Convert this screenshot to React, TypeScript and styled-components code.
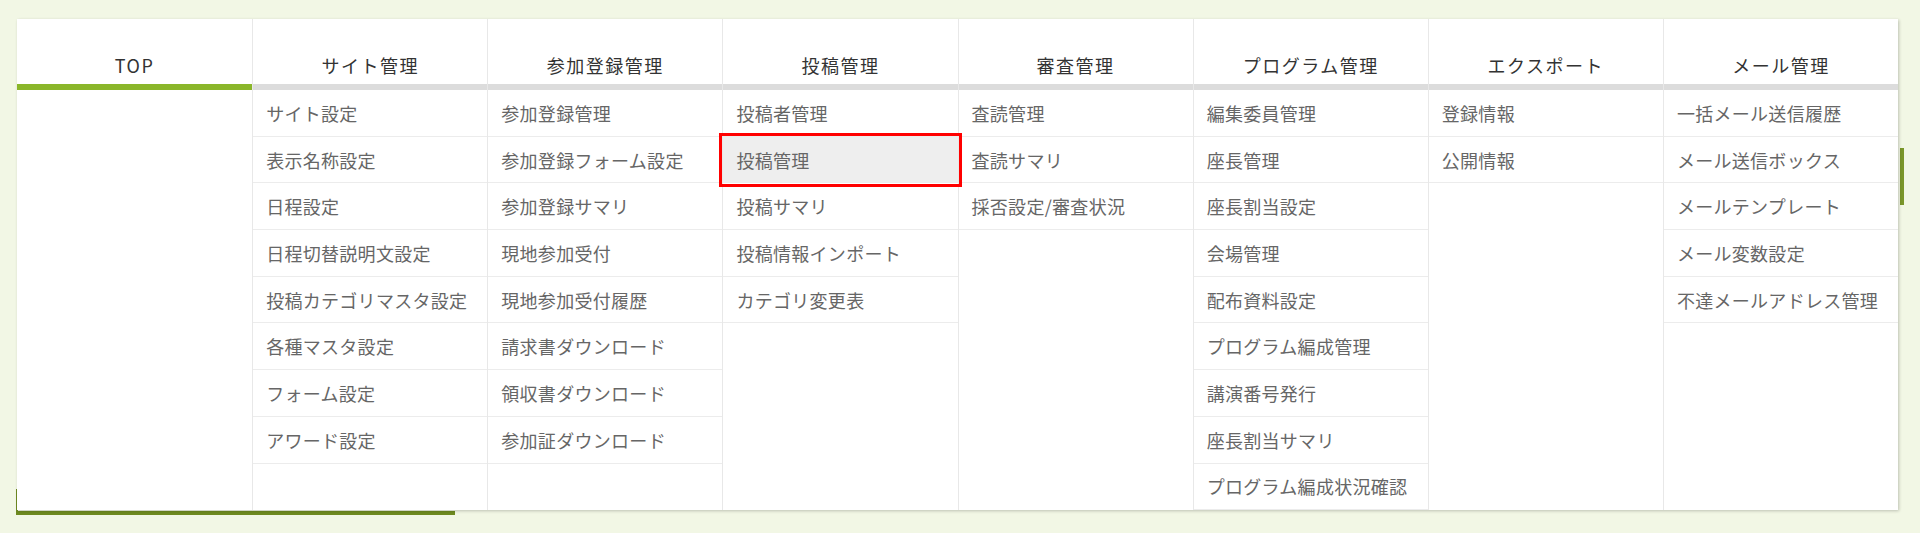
import React from 'react';
import styled, { createGlobalStyle } from 'styled-components';

const GlobalStyle = createGlobalStyle`
  html, body {
    margin: 0;
    padding: 0;
    background: #f2f7e5;
  }
  body {
    font-family: "Noto Sans CJK JP", "Noto Sans", sans-serif;
  }
`;

type MenuGroup = {
  title: string;
  active?: boolean;
  items: string[];
};

const menu: MenuGroup[] = [
  { title: 'TOP', active: true, items: [] },
  {
    title: 'サイト管理',
    items: ['サイト設定', '表示名称設定', '日程設定', '日程切替説明文設定', '投稿カテゴリマスタ設定', '各種マスタ設定', 'フォーム設定', 'アワード設定'],
  },
  {
    title: '参加登録管理',
    items: ['参加登録管理', '参加登録フォーム設定', '参加登録サマリ', '現地参加受付', '現地参加受付履歴', '請求書ダウンロード', '領収書ダウンロード', '参加証ダウンロード'],
  },
  {
    title: '投稿管理',
    items: ['投稿者管理', '投稿管理', '投稿サマリ', '投稿情報インポート', 'カテゴリ変更表'],
  },
  { title: '審査管理', items: ['査読管理', '査読サマリ', '採否設定/審査状況'] },
  {
    title: 'プログラム管理',
    items: ['編集委員管理', '座長管理', '座長割当設定', '会場管理', '配布資料設定', 'プログラム編成管理', '講演番号発行', '座長割当サマリ', 'プログラム編成状況確認'],
  },
  { title: 'エクスポート', items: ['登録情報', '公開情報'] },
  {
    title: 'メール管理',
    items: ['一括メール送信履歴', 'メール送信ボックス', 'メールテンプレート', 'メール変数設定', '不達メールアドレス管理'],
  },
];

const selected = { group: '投稿管理', item: '投稿管理' };

const Page = styled.div`
  position: relative;
  height: 533px;
  overflow: hidden;
`;

// page content partly visible under the open menu
const Content = styled.div`
  position: absolute;
  left: 16px;
  top: 489px;
  width: 437px;
  height: 22px;
  border-left: 2px solid #6f8a22;
  border-bottom: 4px solid #6e8a20;
`;

const ScrollMark = styled.div`
  position: absolute;
  left: 1900px;
  top: 148px;
  width: 4px;
  height: 57px;
  background: #7a962a;
`;

const Dropdown = styled.nav`
  position: absolute;
  left: 17px;
  top: 19px;
  width: 1881px;
  display: grid;
  grid-template-columns: repeat(8, 1fr);
  background: #fff;
  box-shadow: 1px 1px 3px rgba(0, 0, 0, 0.22);
`;

const Column = styled.div<{ $first?: boolean }>`
  display: flex;
  flex-direction: column;
  min-width: 0;
  border-left: ${(p) => (p.$first ? 'none' : '1px solid #e8e8e8')};
`;

const Header = styled.div<{ $active?: boolean }>`
  height: 71px;
  display: flex;
  align-items: flex-end;
  justify-content: center;
  padding-bottom: 6px;
  box-sizing: border-box;
  font-size: 18px;
  letter-spacing: 1.5px;
  color: #333;
  border-bottom: 6px solid ${(p) => (p.$active ? '#8ab62a' : '#dcdcdc')};
`;

const ItemList = styled.ul`
  list-style: none;
  margin: 0;
  padding: 0;
`;

const Item = styled.li<{ $selected?: boolean }>`
  position: relative;
  height: 46.7px;
  box-sizing: border-box;
  display: flex;
  align-items: center;
  padding: 0 0 0 13px;
  font-size: 18px;
  letter-spacing: 0.3px;
  color: #666;
  white-space: nowrap;
  border-bottom: 1px solid #ececec;
  background: ${(p) => (p.$selected ? '#eeeeee' : '#fff')};
  outline: ${(p) => (p.$selected ? '3px solid #ff0000' : 'none')};
  outline-offset: 1px;
  z-index: ${(p) => (p.$selected ? 1 : 0)};
`;

export default function App() {
  return (
    <Page>
      <GlobalStyle />
      <Content />
      <ScrollMark />
      <Dropdown>
        {menu.map((group, i) => (
          <Column key={group.title} $first={i === 0}>
            <Header $active={group.active}>{group.title}</Header>
            <ItemList>
              {group.items.map((item) => (
                <Item
                  key={item}
                  $selected={group.title === selected.group && item === selected.item}
                >
                  {item}
                </Item>
              ))}
            </ItemList>
          </Column>
        ))}
      </Dropdown>
    </Page>
  );
}
